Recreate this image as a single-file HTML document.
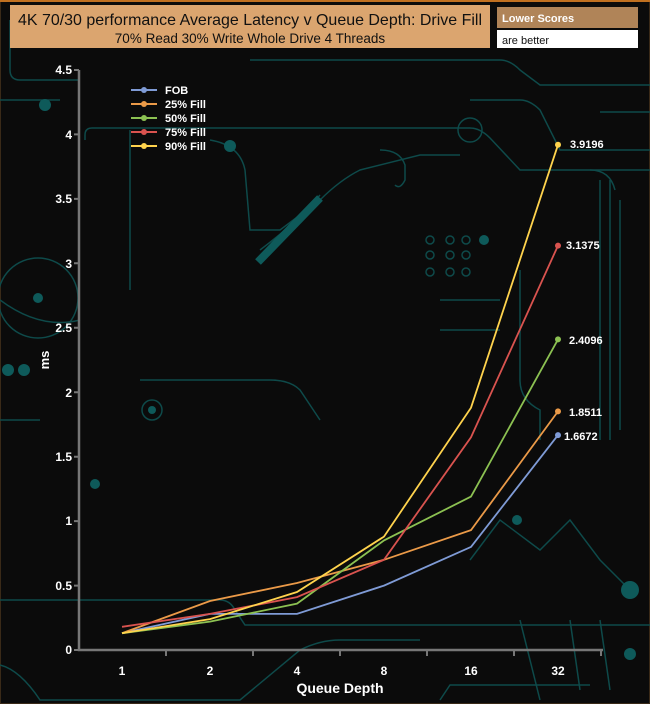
<!DOCTYPE html>
<html><head><meta charset="utf-8"><style>
html,body{margin:0;padding:0;background:#0a0a0a;}
body{width:650px;height:704px;overflow:hidden;position:relative;font-family:"Liberation Sans",Arial,sans-serif;}
svg{position:absolute;left:0;top:0;}
</style></head><body>
<svg width="650" height="704" viewBox="0 0 650 704" xmlns="http://www.w3.org/2000/svg">
<rect x="0" y="0" width="650" height="704" fill="#0b0b0b"/>
<rect x="0.5" y="0.5" width="649" height="703" fill="none" stroke="#3a2a18" stroke-width="1"/>
<line x1="0" y1="1" x2="650" y2="1" stroke="#c07020" stroke-width="2"/>
<g fill="none" stroke="#0e4a4a" stroke-width="1.5">
<path d="M10 20 V70 Q10 80 20 80 H80"/>
<path d="M0 100 H60"/>
<path d="M85 140 V135 Q85 128 92 128 H470 Q480 128 490 138 L520 170 H650"/>
<path d="M250 60 H500 Q510 60 520 70 L540 85 H650"/>
<path d="M470 100 H520 Q530 100 540 110 L560 150 H650"/>
<path d="M600 112 H650"/>
<path d="M210 140 Q240 145 245 170 L250 230 H280 L320 200 Q340 180 360 170 L420 155 H460"/>
<path d="M380 150 Q400 150 405 165 V180 Q400 190 395 185"/>
<path d="M130 130 V290"/>
<path d="M0 300 Q40 330 80 320"/>
<path d="M0 420 H40"/>
<path d="M0 600 H220 Q230 600 235 610 L245 625 H650"/>
<path d="M0 665 Q20 670 40 700 H240 L300 650 Q320 640 340 640 H420"/>
<path d="M440 700 L450 685 H590"/>
<path d="M520 620 L540 700 M570 620 L580 690 M600 620 L610 690"/>
<path d="M600 180 V440 M610 180 V440 M620 200 V430 M590 170 Q610 170 615 190"/>
<path d="M520 270 V380 Q520 400 540 410 V440"/>
<path d="M140 380 H270 Q290 380 300 390 L320 420"/>
<path d="M470 560 L500 520 L540 550 L570 520 L600 560 L630 590"/>
<path d="M440 300 H500 M440 330 H500"/>
<path d="M260 250 Q300 220 320 195"/>
</g>
<g fill="#0e5a5a">
<circle cx="45" cy="105" r="6"/><circle cx="230" cy="146" r="6"/><circle cx="484" cy="240" r="5"/>
<circle cx="630" cy="590" r="9"/><circle cx="630" cy="654" r="6"/><circle cx="95" cy="484" r="5"/>
<circle cx="38" cy="298" r="5"/><circle cx="8" cy="370" r="6"/><circle cx="24" cy="370" r="6"/>
<circle cx="152" cy="410" r="4"/><circle cx="517" cy="520" r="5"/>
</g>
<path d="M258 262 L320 198" stroke="#0e5a5a" stroke-width="8"/>
<g fill="none" stroke="#0e4a4a" stroke-width="1.5">
<circle cx="38" cy="298" r="40"/><circle cx="470" cy="130" r="12"/><circle cx="152" cy="410" r="10"/>
<circle cx="430" cy="240" r="4"/><circle cx="450" cy="240" r="4"/><circle cx="466" cy="240" r="4"/>
<circle cx="430" cy="255" r="4"/><circle cx="450" cy="255" r="4"/><circle cx="466" cy="255" r="4"/>
<circle cx="430" cy="272" r="4"/><circle cx="450" cy="272" r="4"/><circle cx="466" cy="272" r="4"/>
</g>
<!-- title -->
<rect x="10" y="5" width="480" height="43" fill="#dba56f"/>
<text x="18" y="25" font-size="16" fill="#111" textLength="464" lengthAdjust="spacingAndGlyphs">4K 70/30 performance Average Latency v Queue Depth: Drive Fill</text>
<text x="250" y="43" font-size="13.5" fill="#111" text-anchor="middle">70% Read 30% Write Whole Drive 4 Threads</text>
<rect x="497" y="7" width="141" height="21" fill="#b08458"/>
<text x="502" y="22" font-size="11" font-weight="bold" fill="#fff">Lower Scores</text>
<rect x="497" y="30" width="141" height="18" fill="#fff"/>
<text x="502" y="44" font-size="11" fill="#111">are better</text>
<!-- axes -->
<g stroke="#777" stroke-width="2.5" fill="none">
<path d="M79 70 V650 H603"/>
</g>
<g stroke="#777" stroke-width="2">
<path d="M74 70H79M74 134.4H79M74 198.9H79M74 263.3H79M74 327.8H79M74 392.2H79M74 456.7H79M74 521.1H79M74 585.6H79M74 650H79"/>
<path d="M166 650V656M253 650V656M340 650V656M427 650V656M514 650V656M601 650V656"/>
</g>
<g font-size="12" font-weight="bold" fill="#fff" text-anchor="end">
<text x="72" y="74">4.5</text><text x="72" y="139">4</text><text x="72" y="203">3.5</text><text x="72" y="268">3</text>
<text x="72" y="332">2.5</text><text x="72" y="397">2</text><text x="72" y="461">1.5</text><text x="72" y="525">1</text>
<text x="72" y="590">0.5</text><text x="72" y="654">0</text>
</g>
<g font-size="12" font-weight="bold" fill="#fff" text-anchor="middle">
<text x="122" y="675">1</text><text x="210" y="675">2</text><text x="297" y="675">4</text>
<text x="384" y="675">8</text><text x="471" y="675">16</text><text x="558" y="675">32</text>
<text x="340" y="693" font-size="14">Queue Depth</text>
</g>
<text x="49" y="360" font-size="13" font-weight="bold" fill="#fff" text-anchor="middle" transform="rotate(-90 49 360)">ms</text>
<!-- series -->
<g fill="none" stroke-width="1.8">
<polyline stroke="#7f9bd6" points="122,633.2 210,613.9 297,613.9 384,585.6 471,546.9 558,435.1"/>
<polyline stroke="#eb9a48" points="122,633.2 210,601 297,583 384,559.8 471,530.1 558,411.4"/>
<polyline stroke="#8cc152" points="122,633.2 210,621.6 297,603.6 384,540.4 471,496.6 558,339.4"/>
<polyline stroke="#d9534f" points="122,626.8 210,613.9 297,597.1 384,559.8 471,437.3 558,245.6"/>
<polyline stroke="#ffd34d" points="122,633.2 210,619.1 297,592 384,536.6 471,407.7 558,144.8"/>
</g>
<circle cx="558" cy="435.1" r="3" fill="#7f9bd6"/><circle cx="558" cy="411.4" r="3" fill="#eb9a48"/>
<circle cx="558" cy="339.4" r="3" fill="#8cc152"/><circle cx="558" cy="245.6" r="3" fill="#d9534f"/>
<circle cx="558" cy="144.8" r="3" fill="#ffd34d"/>
<g font-size="11" font-weight="bold" fill="#fff">
<text x="570" y="148">3.9196</text><text x="566" y="249">3.1375</text><text x="569" y="344">2.4096</text>
<text x="569" y="416">1.8511</text><text x="564" y="440">1.6672</text>
</g>
<!-- legend -->
<g stroke-width="2">
<line x1="131" y1="90" x2="157" y2="90" stroke="#7f9bd6"/><circle cx="144" cy="90" r="3" fill="#7f9bd6"/>
<line x1="131" y1="104" x2="157" y2="104" stroke="#eb9a48"/><circle cx="144" cy="104" r="3" fill="#eb9a48"/>
<line x1="131" y1="118" x2="157" y2="118" stroke="#8cc152"/><circle cx="144" cy="118" r="3" fill="#8cc152"/>
<line x1="131" y1="132" x2="157" y2="132" stroke="#d9534f"/><circle cx="144" cy="132" r="3" fill="#d9534f"/>
<line x1="131" y1="146" x2="157" y2="146" stroke="#ffd34d"/><circle cx="144" cy="146" r="3" fill="#ffd34d"/>
</g>
<g font-size="11" font-weight="bold" fill="#fff">
<text x="165" y="94">FOB</text><text x="165" y="108">25% Fill</text><text x="165" y="122">50% Fill</text>
<text x="165" y="136">75% Fill</text><text x="165" y="150">90% Fill</text>
</g>
</svg>
</body></html>
